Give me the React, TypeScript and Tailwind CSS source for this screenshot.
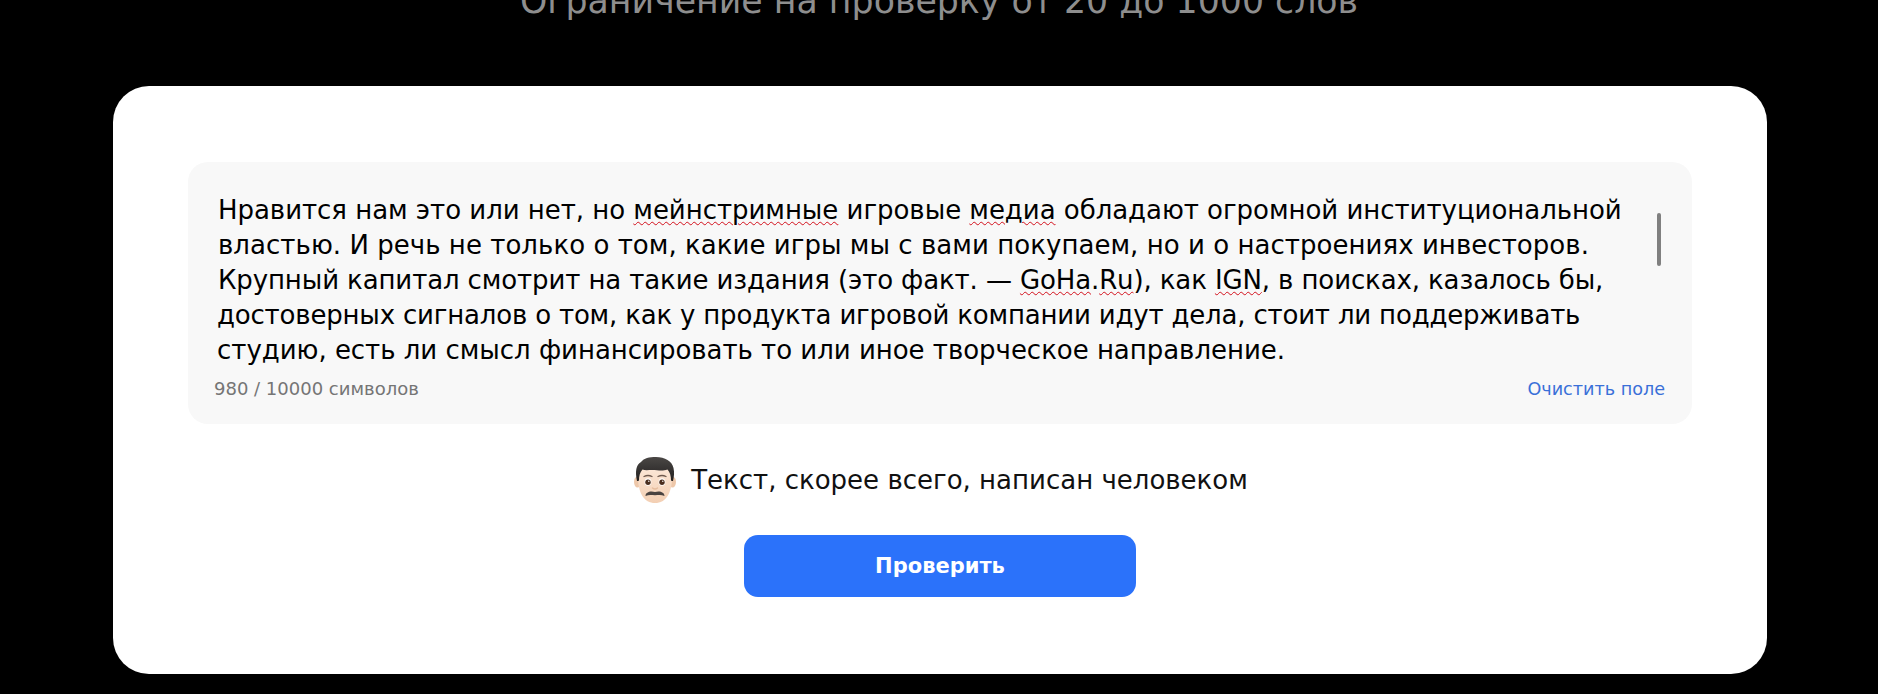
const Squiggle = ({ children }: { children: React.ReactNode }) => (
    <span className="underline decoration-wavy decoration-[#d3101c] decoration-1 underline-offset-2">
        {children}
    </span>
)

const ManEmoji = () => (
    <svg width="46" height="50" viewBox="0 0 46 50">
        <defs>
            <linearGradient id="skin" x1="0" y1="0" x2="0" y2="1">
                <stop offset="0" stopColor="#fdeadb" />
                <stop offset="1" stopColor="#f3cfb3" />
            </linearGradient>
            <linearGradient id="hair" x1="0" y1="0" x2="0" y2="1">
                <stop offset="0" stopColor="#4a4745" />
                <stop offset="1" stopColor="#232120" />
            </linearGradient>
        </defs>
        <ellipse cx="5.500" cy="27" rx="3.500" ry="5.500" fill="#eec8aa" />
        <ellipse cx="40.500" cy="27" rx="3.500" ry="5.500" fill="#eec8aa" />
        <path d="M6 22C6 38 12 48 23 48S40 38 40 22C40 12 33 8 23 8S6 12 6 22Z" fill="url(#skin)" />
        <path d="M5 26C3 16 4 10 9 7C12 3 17 2 24 2C33 2 40 6 41.500 13C42.500 17 42 22 41 26C40.200 26 39.600 26 39 25.500C39 21 38 17 35.500 14.500C30 16.500 26 15 20 15C16 15 13 15.500 10.500 14.500C8 17 7 21 7 25.500C6.400 26 5.800 26 5 26Z" fill="url(#hair)" />
        <ellipse cx="16" cy="27" rx="3.400" ry="3.800" fill="#fff" />
        <ellipse cx="30" cy="27" rx="3.400" ry="3.800" fill="#fff" />
        <circle cx="16" cy="27.300" r="2.700" fill="#4b2e1e" />
        <circle cx="30" cy="27.300" r="2.700" fill="#4b2e1e" />
        <circle cx="16.800" cy="26.300" r="0.700" fill="#fff" />
        <circle cx="30.800" cy="26.300" r="0.700" fill="#fff" />
        <path d="M12 21.500Q16 19.500 20 21.500M26 21.500Q30 19.500 34 21.500" stroke="#6f5a4e" strokeWidth="1.300" strokeLinecap="round" fill="none" />
        <path d="M20.500 33Q23 35 25.500 33" stroke="#e6bd9e" strokeWidth="1.400" strokeLinecap="round" fill="none" />
        <path d="M13.500 41C13.500 37 18.500 35.500 23 37C27.500 35.500 32.500 37 32.500 41C29 39.500 26 40.300 23 40.300S17 39.500 13.500 41Z" fill="#4a4340" />
    </svg>
)

export default function App() {
    return (
        <div className="h-[694px] overflow-hidden bg-black font-['DejaVu_Sans',sans-serif]">
            <p className="-mt-[20px] text-center text-[34.750px] leading-[42px] text-[#8e8e8e]">
                Ограничение на проверку от 20 до 1000 слов
            </p>
            <main className="ml-[113px] mr-[111px] mt-[64px] flex h-[588px] flex-col items-center rounded-[36px] bg-white px-[75px] pt-[76px]">
                <div className="relative h-[262px] w-full rounded-[20px] bg-[#f8f8f8] pl-[30px] pr-[60px] pt-[31px]">
                    <div className="whitespace-nowrap text-[26px] leading-[35px] text-black [font-kerning:none]">
                        <div className="tracking-[-0.040px]">
                            Нравится нам это или нет, но <Squiggle>мейнстримные</Squiggle> игровые{' '}
                            <Squiggle>медиа</Squiggle> обладают огромной институциональной
                        </div>
                        <div className="tracking-[0.040px]">
                            властью. И речь не только о том, какие игры мы с вами покупаем, но и о настроениях инвесторов.
                        </div>
                        <div className="tracking-[-0.120px]">
                            Крупный капитал смотрит на такие издания (это факт. — <Squiggle>GoHa</Squiggle>.<Squiggle>Ru</Squiggle>), как{' '}
                            <Squiggle>IGN</Squiggle>, в поисках, казалось бы,
                        </div>
                        <div className="-ml-px tracking-[-0.190px]">
                            достоверных сигналов о том, как у продукта игровой компании идут дела, стоит ли поддерживать
                        </div>
                        <div className="-ml-px tracking-[-0.030px]">
                            студию, есть ли смысл финансировать то или иное творческое направление.
                        </div>
                    </div>
                    <div className="absolute right-[31px] top-[51px] h-[53px] w-1 rounded-sm bg-[#808080]" />
                    <div className="mt-[9px] flex justify-between text-[18px] leading-[24px]">
                        <span className="-ml-[4px] text-[#757575]">980 / 10000 символов</span>
                        <button className="absolute right-[27px] text-[17.600px] text-[#3a70d8]">Очистить поле</button>
                    </div>
                </div>
                <div className="mt-[31px] flex items-center gap-[13px] text-[26px] leading-[50px] text-[#111]">
                    <ManEmoji />
                    <span>Текст, скорее всего, написан человеком</span>
                </div>
                <button className="mt-[30px] h-[62px] w-[392px] rounded-[14px] bg-[#2b72fa] pt-[2px] text-[21px] font-bold text-white">
                    Проверить
                </button>
            </main>
        </div>
    )
}
